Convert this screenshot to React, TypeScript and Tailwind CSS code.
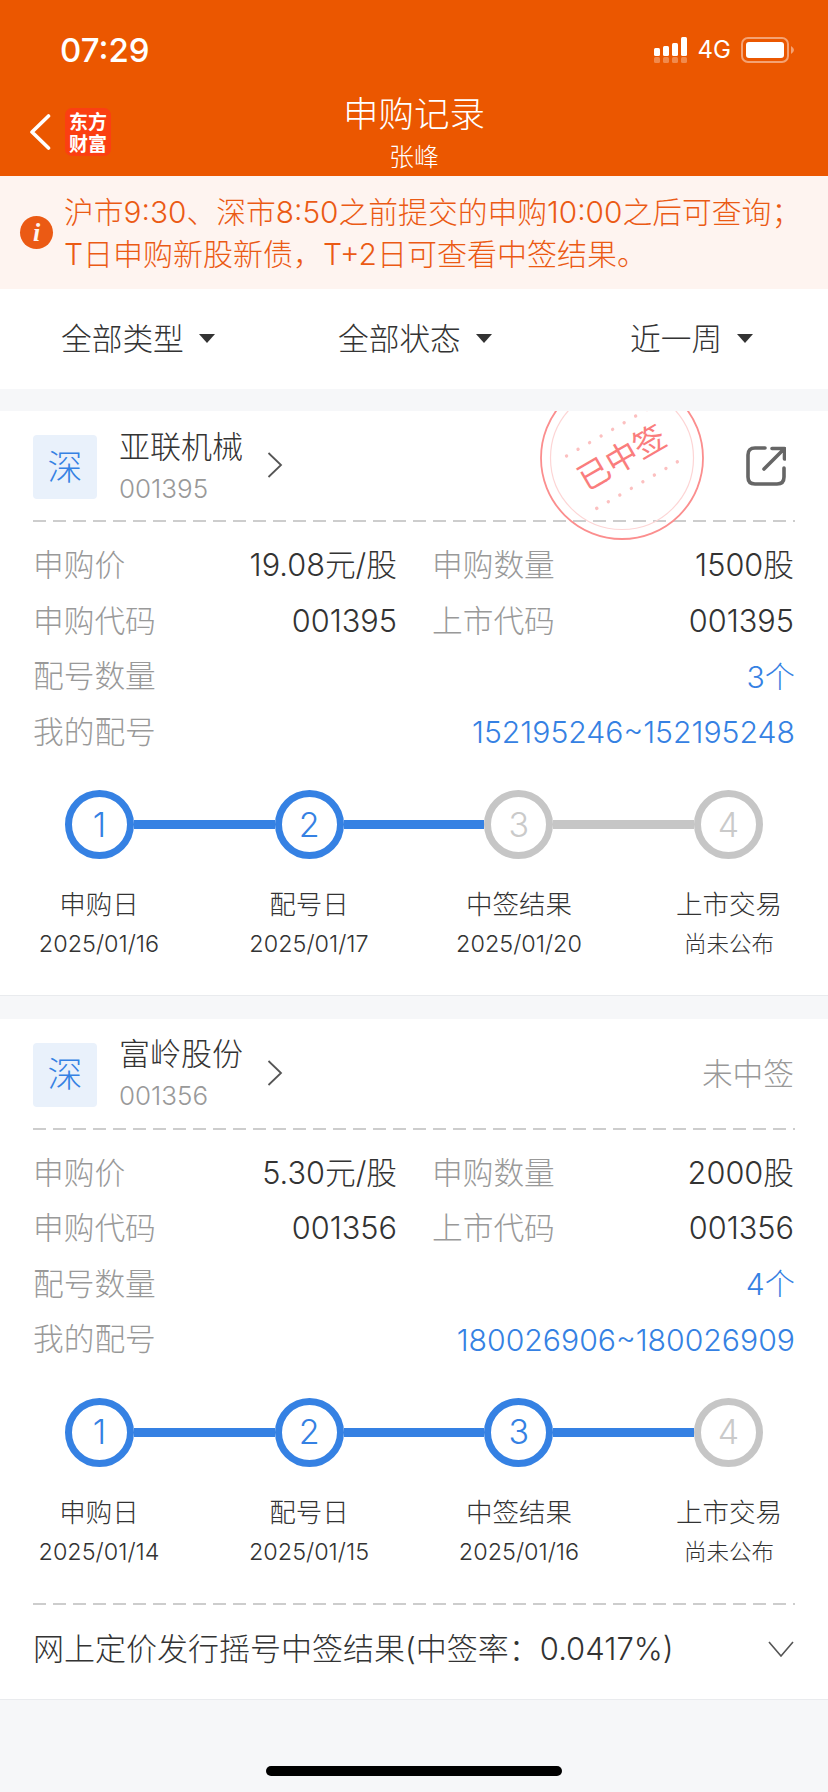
const font = "font-['Inter','Noto_Sans_CJK_SC',sans-serif]";

function Dashed() {
  return <div className="h-[2px] mx-[33px] bg-[repeating-linear-gradient(90deg,#cdcdcd_0_13px,transparent_13px_20px)]" />;
}

function Row({ children }: { children: React.ReactNode }) {
  return <div className="flex h-[55.5px] items-center px-[33px] text-[30.7px] font-light leading-none">{children}</div>;
}

function Pair({ label, value }: { label: string; value: string }) {
  return (
    <div className="flex w-[364px] items-center justify-between first:mr-[35px] last:w-[362px]">
      <span className="text-[#999]">{label}</span>
      <span className="text-[#333]">{value}</span>
    </div>
  );
}

function Wide({ label, value }: { label: string; value: string }) {
  return (
    <Row>
      <span className="text-[#999]">{label}</span>
      <span className="ml-auto text-[30.2px] text-[#3581e3]">{value}</span>
    </Row>
  );
}

function Circle({ n, on }: { n: number; on: boolean }) {
  return (
    <div className={on
      ? "flex h-[69px] w-[69px] shrink-0 items-center justify-center rounded-full border-[7px] border-[#3581e3] text-[#3581e3] text-[34px] font-light leading-none"
      : "flex h-[69px] w-[69px] shrink-0 items-center justify-center rounded-full border-[7px] border-[#c6c6c6] text-[#cacaca] text-[34px] font-light leading-none"}>
      {n}
    </div>
  );
}

function Stepper({ reached, dates }: { reached: number; dates: string[] }) {
  const labels = ["申购日", "配号日", "中签结果", "上市交易"];
  return (
    <div>
      <div className="flex items-center pl-[65px] pr-[65px] pt-[30px]">
        {[1, 2, 3, 4].map((n) => (
          <div key={n} className={n < 4 ? "flex flex-1 items-center" : "flex items-center"}>
            <Circle n={n} on={n <= reached} />
            {n < 4 && <div className={n <= reached ? "h-[9px] flex-1 bg-[#3581e3]" : "h-[9px] flex-1 bg-[#c6c6c6]"} />}
          </div>
        ))}
      </div>
      <div className="flex gap-[30px] pl-[9px] pt-[27px]">
        {labels.map((l, i) => (
          <div key={l} className="flex w-[180px] flex-col items-center">
            <div className="h-[36px] text-[26.5px] font-light leading-[36px] text-[#333]">{l}</div>
            <div className={i < 3 && dates[i].includes("/")
              ? "mt-[4px] h-[36px] text-[23.4px] font-light leading-[36px] text-[#333]"
              : "mt-[4px] h-[36px] text-[22.5px] font-light leading-[36px] text-[#333]"}>{dates[i]}</div>
          </div>
        ))}
      </div>
    </div>
  );
}

function Head({ name, code, right }: { name: string; code: string; right: React.ReactNode }) {
  return (
    <div className="flex h-[109px] items-center pl-[33px] pr-[34px] pt-[3px]">
      <div className="flex h-[64px] w-[64px] items-center justify-center rounded-[4px] bg-[#e9f1fb] text-[35px] font-light leading-none text-[#3581e3]">深</div>
      <div className="ml-[22px] flex w-[126px] flex-col">
        <span className="text-[31px] font-light leading-[40px] text-[#333]">{name}</span>
        <span className="mt-[3px] text-[26px] font-light leading-[38px] text-[#999]">{code}</span>
      </div>
      <svg className="ml-[22px] mb-[4px]" width="16" height="26" viewBox="0 0 16 26" fill="none">
        <path d="M1.5 1 L14 13 L1.5 25" stroke="#555" strokeWidth="1.8" />
      </svg>
      <div className="ml-auto">{right}</div>
    </div>
  );
}

function Stamp() {
  return (
    <div className="absolute left-[540px] top-[-35px] h-[164px] w-[164px]">
      <svg width="164" height="164" viewBox="0 0 164 164" fill="none">
        <circle cx="82" cy="82" r="81" stroke="#fb8e8e" strokeWidth="1.8" />
        <circle cx="82" cy="82" r="71.5" stroke="#fdd5d5" strokeWidth="1.2" />
        <g fill="#fcc0c0" transform="rotate(-30 82 82)">
          {[-47, -33.7, -20.4, -7.1, 6.2, 19.5, 32.8, 46].map((x) => (
            <g key={x}>
              <circle cx={82 + x} cy={52.5} r="1.7" />
              <circle cx={82 + x} cy={113} r="1.7" />
            </g>
          ))}
        </g>
      </svg>
      <div className="absolute inset-0 flex items-center justify-center text-[32px] font-normal leading-none text-[#fa7d7d] -rotate-30">已中签</div>
    </div>
  );
}

function Share() {
  return (
    <svg width="40" height="42" viewBox="0 0 40 42" fill="none" className="mr-[8px] mt-[-2px]">
      <path d="M19 3 H9 Q2 3 2 10 V32 Q2 39 9 39 H31 Q38 39 38 32 V23" stroke="#666" strokeWidth="3.6" strokeLinecap="round" />
      <path d="M18 24 L37 5 M26 3.5 H38.5 V14" stroke="#666" strokeWidth="3.6" strokeLinecap="round" strokeLinejoin="round" />
    </svg>
  );
}

function Card({ name, code, price, qty, count, range, reached, dates, right, stamp, children }: {
  name: string; code: string; price: string; qty: string; count: string; range: string; reached: number; dates: string[]; right: React.ReactNode; stamp?: boolean; children?: React.ReactNode;
}) {
  return (
    <div className="relative overflow-hidden border-b border-[#e9ebee] bg-white">
      {stamp && <Stamp />}
      <Head name={name} code={code} right={right} />
      <Dashed />
      <div className="pt-[16px]">
        <Row><Pair label="申购价" value={price} /><Pair label="申购数量" value={qty} /></Row>
        <Row><Pair label="申购代码" value={code} /><Pair label="上市代码" value={code} /></Row>
        <Wide label="配号数量" value={count} />
        <Wide label="我的配号" value={range} />
      </div>
      <Stepper reached={reached} dates={dates} />
      {children ?? <div className="h-[32.5px]" />}
    </div>
  );
}

export default function App() {
  return (
    <div className={`${font} relative h-[1792px] w-[828px] overflow-hidden bg-[#f6f7f9]`}>
      <header className="h-[176px] bg-[#eb5700] text-white">
        <div className="flex h-[90px] items-center pl-[60px] pr-[33px] pt-[10px]">
          <span className="text-[33px] font-medium leading-none">07:29</span>
          <div className="ml-auto flex items-center">
            <svg width="34" height="26" viewBox="0 0 34 26">
              <g fill="#fff">
                <rect x="0" y="11" width="6" height="8" rx="1.5" />
                <rect x="9" y="9" width="6" height="10" rx="1.5" />
                <rect x="18" y="6" width="6" height="13" rx="1.5" />
                <rect x="27" y="0" width="6" height="19" rx="1.5" />
              </g>
              <g fill="#fff" opacity="0.3">
                <rect x="0" y="20" width="6" height="6" rx="1.5" />
                <rect x="9" y="20" width="6" height="6" rx="1.5" />
                <rect x="18" y="20" width="6" height="6" rx="1.5" />
                <rect x="27" y="20" width="6" height="6" rx="1.5" />
              </g>
            </svg>
            <span className="ml-[10px] text-[24px] font-normal leading-none">4G</span>
            <svg className="ml-[10px]" width="54" height="26" viewBox="0 0 54 26" fill="none">
              <rect x="1" y="1" width="46" height="24" rx="6" stroke="#fff" strokeOpacity="0.45" strokeWidth="2" />
              <rect x="5" y="5" width="38" height="16" rx="3" fill="#fff" />
              <path d="M50 9 Q53 11 53 13 Q53 15 50 17 Z" fill="#fff" fillOpacity="0.45" />
            </svg>
          </div>
        </div>
        <div className="relative flex h-[86px] items-start pl-[29px]">
          <svg className="mt-[24px]" width="22" height="36" viewBox="0 0 22 36" fill="none">
            <path d="M19.5 2 L3 18 L19.5 34" stroke="#fff" strokeWidth="3.6" strokeLinecap="round" strokeLinejoin="round" />
          </svg>
          <div className="ml-[14px] mt-[18px] flex h-[48px] w-[46px] items-center justify-center rounded-[7px] bg-[#fb3f12]">
            <div className="w-[38px] break-all text-center font-['Noto_Sans_CJK_SC',sans-serif] text-[19px] font-bold leading-[22px] text-white">东方财富</div>
          </div>
          <div className="absolute inset-x-0 top-0 flex flex-col items-center pt-[2px]">
            <span className="text-[35.5px] font-light leading-[46px]">申购记录</span>
            <span className="text-[25px] font-light leading-[38px]">张峰</span>
          </div>
        </div>
      </header>

      <div className="flex h-[113px] items-center bg-[#fef4f0] pl-[20px] text-[#eb5a14]">
        <div className="flex h-[33px] w-[33px] shrink-0 items-center justify-center rounded-full bg-[#eb5a14] font-['Liberation_Serif',serif] text-[26px] font-bold italic leading-none text-[#fef4f0]">i</div>
        <div className="ml-[11px] whitespace-nowrap font-light leading-[42px]">
          <div className="text-[29.8px]">沪市9:30、深市8:50之前提交的申购10:00之后可查询；</div>
          <div className="text-[30px]">T日申购新股新债，T+2日可查看中签结果。</div>
        </div>
      </div>

      <div className="flex h-[100px] items-center bg-white text-[30.7px] font-light leading-none text-[#333]">
        {[
          { t: "全部类型", w: "ml-[61px] w-[277px]" },
          { t: "全部状态", w: "w-[292px]" },
          { t: "近一周", w: "w-[198px]" },
        ].map((f) => (
          <div key={f.t} className={`flex items-center ${f.w}`}>
            <span>{f.t}</span>
            <svg className="ml-[15px]" width="16" height="9" viewBox="0 0 16 9"><path d="M0 0 H16 L8 9 Z" fill="#333" /></svg>
          </div>
        ))}
      </div>

      <div className="h-[22px]" />

      <Card name="亚联机械" code="001395" price="19.08元/股" qty="1500股" count="3个" range="152195246~152195248" reached={2}
        dates={["2025/01/16", "2025/01/17", "2025/01/20", "尚未公布"]} right={<Share />} stamp />

      <div className="h-[23px]" />

      <Card name="富岭股份" code="001356" price="5.30元/股" qty="2000股" count="4个" range="180026906~180026909" reached={3}
        dates={["2025/01/14", "2025/01/15", "2025/01/16", "尚未公布"]} right={<span className="text-[30.7px] font-light text-[#999]">未中签</span>}>
        <div className="pt-[33.5px]">
          <Dashed />
          <div className="flex h-[94px] items-center pb-[6px] pl-[33px] pr-[34px] text-[31px] font-light text-[#333]">
            <span>网上定价发行摇号中签结果(中签率：0.0417%)</span>
            <svg className="ml-auto" width="26" height="16" viewBox="0 0 26 16" fill="none"><path d="M1 1 L13 15 L25 1" stroke="#555" strokeWidth="1.6" /></svg>
          </div>
        </div>
      </Card>

      <div className="absolute bottom-[16px] left-[266px] h-[10px] w-[296px] rounded-full bg-black" />
    </div>
  );
}
